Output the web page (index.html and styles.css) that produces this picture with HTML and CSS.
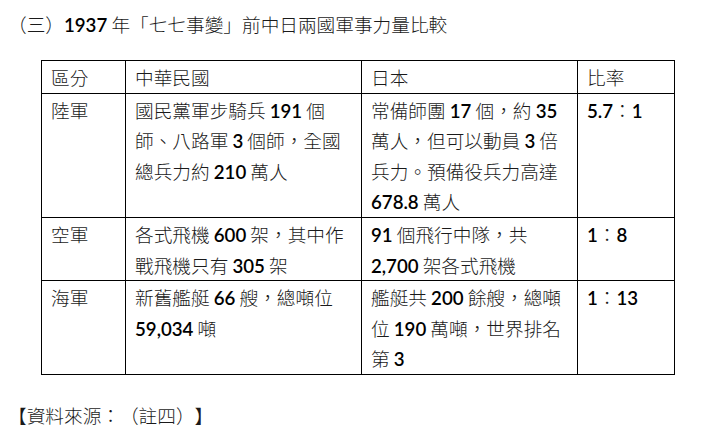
FILE: index.html
```html
<!DOCTYPE html>
<html lang="zh-Hant">
<head>
<meta charset="utf-8">
<title>1937 年「七七事變」前中日兩國軍事力量比較</title>
<link rel="stylesheet" href="styles.css">
</head>
<body>
<div class="title">（三）<span class="n">1937</span> 年「七七事變」前中日兩國軍事力量比較</div>
<table class="cmp">
  <colgroup>
    <col class="c1"><col class="c2"><col class="c3"><col class="c4">
  </colgroup>
  <tr class="head">
    <td>區分</td><td>中華民國</td><td>日本</td><td>比率</td>
  </tr>
  <tr>
    <td>陸軍</td>
    <td>國民黨軍步騎兵 <span class="n">191</span> 個<br>師、八路軍 <span class="n">3</span> 個師，全國<br>總兵力約 <span class="n">210</span> 萬人</td>
    <td>常備師團 <span class="n">17</span> 個，約 <span class="n">35</span><br>萬人，但可以動員 <span class="n">3</span> 倍<br>兵力。預備役兵力高達<br><span class="n">678.8</span> 萬人</td>
    <td><span class="n">5.7</span>：<span class="n">1</span></td>
  </tr>
  <tr>
    <td>空軍</td>
    <td>各式飛機 <span class="n">600</span> 架，其中作<br>戰飛機只有 <span class="n">305</span> 架</td>
    <td><span class="n">91</span> 個飛行中隊，共<br><span class="n">2,700</span> 架各式飛機</td>
    <td><span class="n">1</span>：<span class="n">8</span></td>
  </tr>
  <tr>
    <td>海軍</td>
    <td>新舊艦艇 <span class="n">66</span> 艘，總噸位<br><span class="n">59,034</span> 噸</td>
    <td>艦艇共 <span class="n">200</span> 餘艘，總噸<br>位 <span class="n">190</span> 萬噸，世界排名<br>第 <span class="n">3</span></td>
    <td><span class="n">1</span>：<span class="n">13</span></td>
  </tr>
</table>
<div class="source">【資料來源：（註四）】</div>
</body>
</html>
```
FILE: styles.css
```css
html, body {
  margin: 0;
  padding: 0;
  background: #ffffff;
}
body {
  padding: 8px;
  font-family: "Noto Sans CJK TC", "Noto Sans CJK SC", sans-serif;
  font-size: 18.67px;
  font-weight: 300;
  color: #1a1a1a;
  text-spacing-trim: space-all;
}
.n {
  font-family: "Lato", "Noto Sans CJK TC", sans-serif;
  font-weight: 600;
  color: #000;
  line-height: 1;
}
.title {
  line-height: 32px;
  white-space: nowrap;
}
.cmp {
  margin: 20px 0 0 33px;
  border-collapse: collapse;
  table-layout: fixed;
  width: 633px;
}
.c1 { width: 84px; }
.c2 { width: 236px; }
.c3 { width: 216px; }
.c4 { width: 97px; }
.cmp td {
  border: 1px solid #000;
  vertical-align: top;
  padding: 1px 8px 0 9px;
  line-height: 30.6px;
  white-space: nowrap;
}
.source {
  margin-top: 24px;
  line-height: 32px;
}
```
